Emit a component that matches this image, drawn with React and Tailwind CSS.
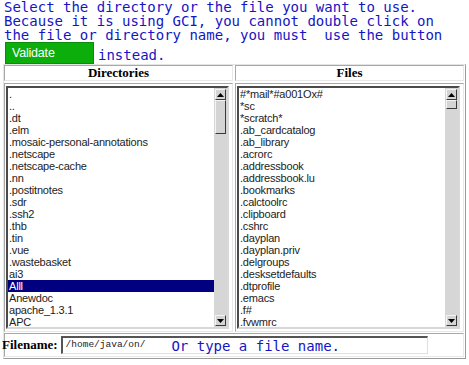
const dirs = [
  '.', '..', '.dt', '.elm', '.mosaic-personal-annotations', '.netscape', '.netscape-cache',
  '.nn', '.postitnotes', '.sdr', '.ssh2', '.thb', '.tin', '.vue', '.wastebasket', 'ai3',
  'Alll', 'Anewdoc', 'apache_1.3.1', 'APC',
]

const files = [
  '#*mail*#a001Ox#', '*sc', '*scratch*', '.ab_cardcatalog', '.ab_library', '.acrorc',
  '.addressbook', '.addressbook.lu', '.bookmarks', '.calctoolrc', '.clipboard', '.cshrc',
  '.dayplan', '.dayplan.priv', '.delgroups', '.desksetdefaults', '.dtprofile', '.emacs',
  '.f#', '.fvwmrc',
]

const mono = "font-['DejaVu_Sans_Mono',monospace] text-[14px] leading-[14px] text-[#1515c4]"

function ArrowButton({ up }) {
  return (
    <div className="flex h-[11px] w-[11px] items-center justify-center border border-t-[#f4f4f4] border-l-[#f4f4f4] border-b-[#3a3a3a] border-r-[#3a3a3a] bg-[#d4d4d4]">
      <svg width="7" height="4" viewBox="0 0 7 4">
        {up ? <path d="M3.5 0 L7 4 L0 4 Z" fill="#000" /> : <path d="M0 0 L7 0 L3.5 4 Z" fill="#000" />}
      </svg>
    </div>
  )
}

function ScrollBar({ thumb }) {
  return (
    <div className="flex w-[13px] flex-col bg-[#d6d6d6] py-[1px] pl-[1px]">
      <ArrowButton up />
      <div className={`${thumb} w-[11px] border border-t-[#f4f4f4] border-l-[#f4f4f4] border-b-[#3a3a3a] border-r-[#3a3a3a] bg-[#d4d4d4]`} />
      <div className="flex-1" />
      <ArrowButton />
    </div>
  )
}

function ListBox({ items, selected, thumb }) {
  return (
    <div className="flex h-[243px] w-[223px] border-2 border-t-[#4a4a4a] border-l-[#4a4a4a] border-b-[#d8d8d8] border-r-[#d8d8d8] bg-white">
      <div className="flex-1 overflow-hidden text-[11px] tracking-[-0.2px]">
        {items.map((it) => (
          <div
            key={it}
            className={`h-[12px] whitespace-nowrap pl-[1px] leading-[12px] ${it === selected ? 'bg-[#000080] text-white' : 'text-[#222]'}`}
          >
            {it}
          </div>
        ))}
      </div>
      <ScrollBar thumb={thumb} />
    </div>
  )
}

export default function App() {
  return (
    <div className="h-[365px] w-[469px] overflow-hidden bg-white font-['Liberation_Sans',Arial,sans-serif]">
      <div className={`${mono} pl-[4px]`}>
        <div className="whitespace-pre">Select the directory or the file you want to use.</div>
        <div className="whitespace-pre">Because it is using GCI, you cannot double click on</div>
        <div className="whitespace-pre">the file or directory name, you must  use the button</div>
      </div>

      <div className="flex items-center">
        <button className="ml-[5px] h-[22px] w-[89px] border border-[#0c8c0c] bg-[#0cae0c] pl-[6px] text-left text-[12.5px] tracking-[-0.2px] text-white">
          Validate
        </button>
        <span className={`${mono} ml-[4px] mt-[3px]`}>instead.</span>
      </div>

      <div className="ml-[3px] w-[463px] border border-t-[#e4e4e4] border-l-[#e4e4e4] border-b-[#9a9a9a] border-r-[#9a9a9a] pb-[1px] pr-[1px]">
        <div className="grid grid-cols-[229px_229px] gap-x-[2px] gap-y-[2px]">
          <div className="flex h-[16px] items-center justify-center border border-t-[#a8a8a8] border-l-[#a8a8a8] border-b-[#e8e8e8] border-r-[#e8e8e8] font-['Liberation_Serif',serif] text-[13px] font-bold text-black">
            Directories
          </div>
          <div className="flex h-[16px] items-center justify-center border border-t-[#a8a8a8] border-l-[#a8a8a8] border-b-[#e8e8e8] border-r-[#e8e8e8] font-['Liberation_Serif',serif] text-[13px] font-bold text-black">
            Files
          </div>

          <div className="border border-t-[#a8a8a8] border-l-[#a8a8a8] border-b-[#e8e8e8] border-r-[#e8e8e8] px-[1px] py-[2px]">
            <ListBox items={dirs} selected="Alll" thumb="h-[34px]" />
          </div>
          <div className="border border-t-[#a8a8a8] border-l-[#a8a8a8] border-b-[#e8e8e8] border-r-[#e8e8e8] px-[1px] py-[2px]">
            <ListBox items={files} thumb="h-[9px]" />
          </div>

          <div className="col-span-2 -mt-[1px] flex h-[24px] items-center border border-t-[#a8a8a8] border-l-[#a8a8a8] border-b-[#e8e8e8] border-r-[#e8e8e8]">
            <span className="-ml-[3px] font-['Liberation_Serif',serif] text-[13px] font-bold text-black">Filename:</span>
            <div className="ml-[3px] flex h-[18px] w-[367px] items-center border-2 border-r border-b border-t-[#555] border-l-[#555] border-b-[#e0e0e0] border-r-[#e0e0e0] bg-white">
              <span className="pl-[3px] font-['Liberation_Mono',monospace] text-[9.5px] text-[#222]">/home/java/on/</span>
              <span className={`${mono} ml-[26px]`}>Or type a file name.</span>
            </div>
          </div>
        </div>
      </div>
    </div>
  )
}
